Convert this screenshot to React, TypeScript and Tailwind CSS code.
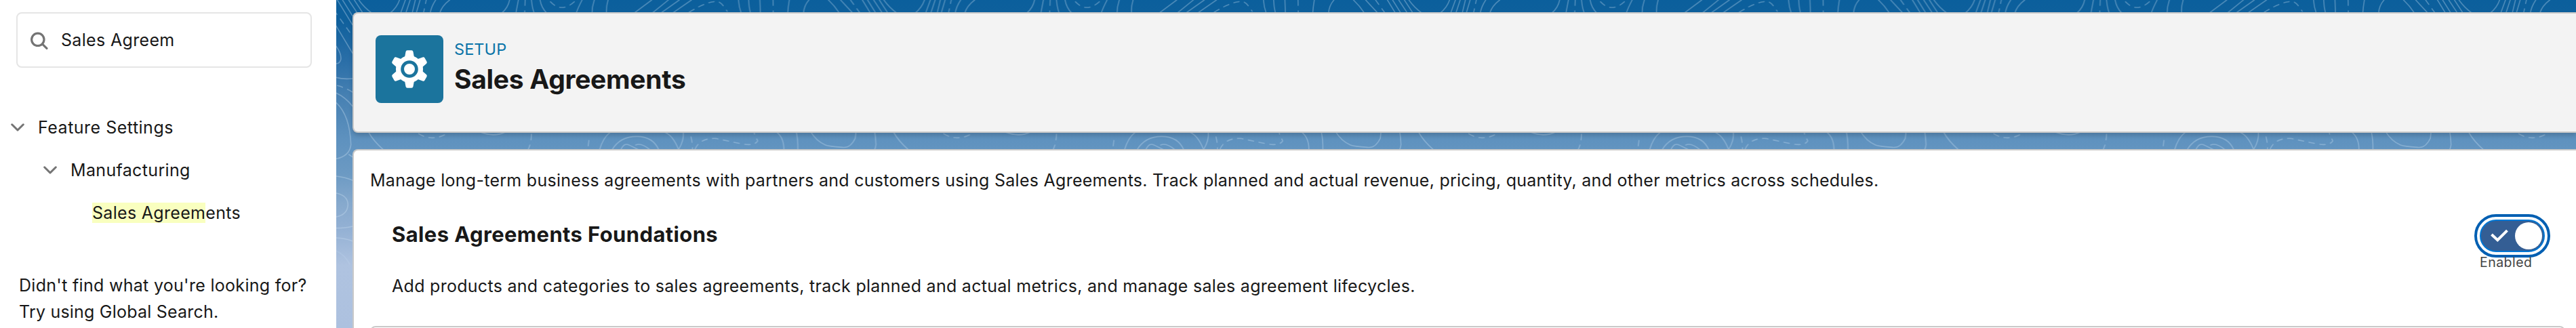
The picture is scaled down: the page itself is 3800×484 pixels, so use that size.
import React from "react";

const solidLines = [
  "M5 0L72 110", "M28 0L72 70", "M55 0L92 56", "M80 0L118 58", "M100 0Q125 35 158 58",
  "M280 0Q268 35 238 58", "M306 0L285 58", "M327 0L308 58", "M350 0L336 58", "M371 0L354 58",
  "M440 0Q420 30 416 58", "M502 0Q468 25 458 58", "M767 0Q760 35 732 58", "M806 0L795 58",
  "M864 0Q867 35 876 58", "M902 0Q908 35 932 58", "M1088 0Q1070 35 1062 58", "M1142 0Q1132 30 1132 58",
  "M1203 0Q1194 30 1196 58", "M1396 0L1318 58", "M1470 0L1398 58", "M1518 0L1436 58", "M1572 0L1488 58",
  "M1780 0Q1782 30 1792 58", "M1825 0Q1826 30 1833 58", "M1875 0L1877 58", "M2005 0Q2000 30 1998 58",
  "M2092 0Q2070 25 2068 58", "M2178 0Q2205 25 2227 58", "M2232 0L2286 58",
  "M0 115L72 235", "M0 205Q25 240 20 265Q15 282 0 282", "M0 343Q30 352 72 348",
  "M0 412Q40 430 72 470", "M0 455Q60 510 65 640Q60 690 0 703", "M56 684L74 696",
  "M0 780Q40 785 72 798", "M0 855Q50 865 52 905Q50 950 0 960", "M0 1010Q40 1010 72 1002",
  "M0 1053Q40 1055 72 1067",
  "M143 585Q165 625 210 664", "M640 586Q700 608 750 584",
  "M1165 664Q1180 610 1212 586", "M1220 664Q1255 604 1330 604Q1402 604 1428 664",
  "M1455 586Q1490 600 1515 662Q1540 620 1536 586", "M1260 662Q1275 628 1300 644L1340 664M1325 642Q1350 630 1390 664",
  "M1948 584Q1982 610 1981 664", "M2036 584Q2044 620 2043 664",
  "M2100 584Q2125 625 2165 642Q2180 648 2240 652Q2275 658 2297 612L2300 584",
];

const dashedLines = [
  "M-10 45L72 160", "M400 -8L386 58", "M948 8Q1000 62 1062 0", "M836 0L834 58",
  "M1562 54Q1650 0 1690 8Q1705 10 1730 50", "M1933 0L1934 58", "M2276 0L2318 58",
  "M5 379Q40 388 72 408", "M365 592Q430 632 502 584", "M864 594Q862 640 848 664", "M1118 622L1113 664",
  "M1570 606Q1578 640 1576 664", "M1588 660Q1610 610 1680 613L1790 636Q1850 648 1865 624L1850 590",
];

function Backdrop() {
  return (
    <svg className="absolute inset-0 h-full w-full" aria-hidden="true">
      <defs>
        <linearGradient id="sky" x1="0" y1="0" x2="0" y2="484" gradientUnits="userSpaceOnUse">
          <stop offset="0" stopColor="#0b5f9c" />
          <stop offset="0.06" stopColor="#0f609c" />
          <stop offset="0.19" stopColor="#2b6fa8" />
          <stop offset="0.29" stopColor="#4680b2" />
          <stop offset="0.43" stopColor="#5f92bf" />
          <stop offset="0.53" stopColor="#6c9ac3" />
          <stop offset="0.62" stopColor="#86a9cd" />
          <stop offset="0.7" stopColor="#94b1d4" />
          <stop offset="0.81" stopColor="#afc3e0" />
          <stop offset="1" stopColor="#adc1df" />
        </linearGradient>
        <pattern id="contours" width="774.5" height="484" patternUnits="userSpaceOnUse">
          <g transform="scale(0.33333)" fill="none" stroke="#cfe2f5" strokeOpacity="0.34" strokeWidth="4.8" strokeLinecap="round">
            {solidLines.map((d) => <path key={d} d={d} />)}
            {dashedLines.map((d) => <path key={d} d={d} strokeDasharray="24 24" />)}
            <path d="M0 1110Q40 1130 60 1170" strokeOpacity="0.15" />
          </g>
        </pattern>
      </defs>
      <rect width="100%" height="100%" fill="url(#sky)" />
      <rect width="100%" height="100%" fill="url(#contours)" />
    </svg>
  );
}

function Chevron() {
  return (
    <svg className="h-3 w-5 shrink-0" viewBox="0 0 20 12" fill="none" stroke="#747474" strokeWidth="3" strokeLinecap="round" strokeLinejoin="round">
      <path d="M1.7 1.8L10 10L18.3 1.8" />
    </svg>
  );
}

function Sidebar() {
  return (
    <aside className="flex w-[496px] shrink-0 flex-col bg-white pt-[18px] text-[25px]">
      <div className="ml-6 flex h-[82px] w-[436px] items-center rounded-lg border-2 border-[#e5e5e5] pl-[18px]">
        <svg className="mt-[3px] h-7 w-7" viewBox="0 0 28 28" fill="none" stroke="#747474" strokeWidth="3.2" strokeLinecap="round">
          <circle cx="11.8" cy="11.3" r="9.2" />
          <path d="M18.6 18.2L25 24.4" />
        </svg>
        <span className="mt-[2px] ml-[18px] tracking-[0.33px]">Sales Agreem</span>
      </div>
      <div className="mt-[68px] flex h-10 items-center pl-4">
        <Chevron />
        <span className="ml-5 leading-10 tracking-[0.5px]">Feature Settings</span>
      </div>
      <div className="mt-[23px] flex h-10 items-center pl-16">
        <Chevron />
        <span className="ml-5 leading-10 tracking-[0.34px]">Manufacturing</span>
      </div>
      <div className="mt-[23px] h-10 pl-[136px] leading-10 tracking-[0.31px]">
        <mark className="bg-[#f9ffbf] text-[#181818]">Sales Agreem</mark>ents
      </div>
      <p className="mt-[68px] pl-7 leading-[39px] tracking-[0.3px]">
        Didn't find what you're looking for?<br />
        <span className="tracking-[0.21px]">Try using Global Search.</span>
      </p>
    </aside>
  );
}

function SetupIcon() {
  return (
    <div className="flex h-[100px] w-[100px] shrink-0 items-center justify-center rounded-lg bg-[#1b749d]">
      <svg className="h-[60px] w-[60px]" viewBox="-30 -30 60 60">
        <g fill="#fff" stroke="#fff" strokeLinejoin="round">
          <circle r="19.5" strokeWidth="1" />
          {[0, 60, 120, 180, 240, 300].map((a) => (
            <path key={a} strokeWidth="5" d="M-3 -25.2H3L4.6 -16.5H-4.6Z" transform={`rotate(${a})`} />
          ))}
        </g>
        <circle r="10.4" fill="none" stroke="#1b749d" strokeWidth="4.8" />
      </svg>
    </div>
  );
}

function Toggle() {
  return (
    <div className="flex flex-col items-start">
      <div className="h-16 w-28 rounded-full border-4 border-[#005fb2] bg-white p-1">
        <div className="flex h-12 w-24 items-center justify-between rounded-full border-2 border-[#0176d3] bg-[#345e94] pr-0.5 pl-3.5">
          <svg className="h-5 w-[26px]" viewBox="0 0 26 20" fill="none" stroke="#fff" strokeWidth="4">
            <path d="M1.5 8L10.3 16.2L24.5 2.2" />
          </svg>
          <span className="h-10 w-10 rounded-full bg-white" />
        </div>
      </div>
      <span className="-mt-[5px] ml-2 text-[19.5px] leading-6 tracking-[0.46px] text-[#444444]">Enabled</span>
    </div>
  );
}

export default function App() {
  return (
    <div className="flex h-[484px] w-[3800px] overflow-hidden bg-white font-[Inter,sans-serif] text-[#181818]">
      <Sidebar />
      <main className="relative min-w-0 grow overflow-hidden">
        <Backdrop />
        <div className="relative flex flex-col pt-[18px] pl-6">
          <header className="flex h-[178px] gap-4 rounded-l-lg border-2 border-r-0 border-[#c9c9c9] bg-[#f3f3f3] pt-8 pl-8 shadow-[0_4px_6px_rgba(0,0,0,0.16)]">
            <SetupIcon />
            <div className="flex flex-col pt-1.5">
              <span className="text-[23.5px] leading-[30px] tracking-[0.08px] text-[#0b74a8]">SETUP</span>
              <h1 className="mt-1.5 text-[39px] leading-[46px] font-bold tracking-[-0.3px]">Sales Agreements</h1>
            </div>
          </header>
          <section className="mt-6 flex h-[300px] flex-col rounded-l-lg border-2 border-r-0 border-[#c9c9c9] bg-white pt-6 pl-6">
            <p className="text-[25px] leading-10 tracking-[0.268px] whitespace-nowrap">
              Manage long-term business agreements with partners and customers using Sales Agreements. Track planned and actual revenue, pricing, quantity, and other metrics across schedules.
            </p>
            <div className="flex h-[195px] shrink-0 pt-[30px] pr-[38px] pl-8">
              <div className="grow pt-2.5">
                <h2 className="text-[31px] leading-10 font-bold tracking-[0.38px]">Sales Agreements Foundations</h2>
                <p className="mt-9 text-[25px] leading-10 tracking-[0.285px]">
                  Add products and categories to sales agreements, track planned and actual metrics, and manage sales agreement lifecycles.
                </p>
              </div>
              <Toggle />
            </div>
            <div className="mr-4 h-10 shrink-0 rounded-lg border-2 border-[#c9c9c9]" />
          </section>
        </div>
      </main>
    </div>
  );
}
